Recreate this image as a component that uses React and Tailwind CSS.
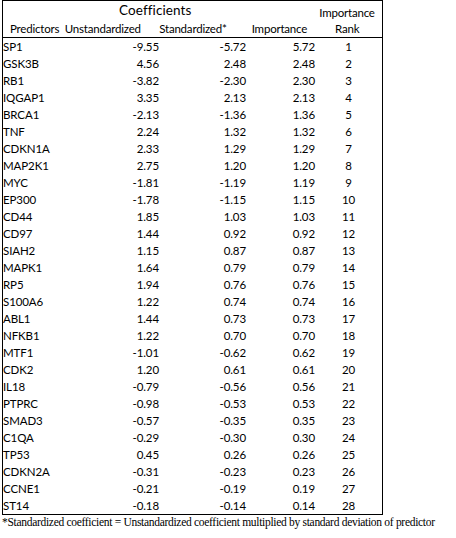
const rows = [
  ["SP1", "-9.55", "-5.72", "5.72", 1],
  ["GSK3B", "4.56", "2.48", "2.48", 2],
  ["RB1", "-3.82", "-2.30", "2.30", 3],
  ["IQGAP1", "3.35", "2.13", "2.13", 4],
  ["BRCA1", "-2.13", "-1.36", "1.36", 5],
  ["TNF", "2.24", "1.32", "1.32", 6],
  ["CDKN1A", "2.33", "1.29", "1.29", 7],
  ["MAP2K1", "2.75", "1.20", "1.20", 8],
  ["MYC", "-1.81", "-1.19", "1.19", 9],
  ["EP300", "-1.78", "-1.15", "1.15", 10],
  ["CD44", "1.85", "1.03", "1.03", 11],
  ["CD97", "1.44", "0.92", "0.92", 12],
  ["SIAH2", "1.15", "0.87", "0.87", 13],
  ["MAPK1", "1.64", "0.79", "0.79", 14],
  ["RP5", "1.94", "0.76", "0.76", 15],
  ["S100A6", "1.22", "0.74", "0.74", 16],
  ["ABL1", "1.44", "0.73", "0.73", 17],
  ["NFKB1", "1.22", "0.70", "0.70", 18],
  ["MTF1", "-1.01", "-0.62", "0.62", 19],
  ["CDK2", "1.20", "0.61", "0.61", 20],
  ["IL18", "-0.79", "-0.56", "0.56", 21],
  ["PTPRC", "-0.98", "-0.53", "0.53", 22],
  ["SMAD3", "-0.57", "-0.35", "0.35", 23],
  ["C1QA", "-0.29", "-0.30", "0.30", 24],
  ["TP53", "0.45", "0.26", "0.26", 25],
  ["CDKN2A", "-0.31", "-0.23", "0.23", 26],
  ["CCNE1", "-0.21", "-0.19", "0.19", 27],
  ["ST14", "-0.18", "-0.14", "0.14", 28],
];

export default function App() {
  return (
    <div className="w-[456px] h-[538px] bg-white text-black font-['Lato',sans-serif]">
      <div className="ml-[2px] w-[381px] border border-black">
        <div className="h-[37px] border-b border-black flex flex-col">
          <div className="flex h-[20px] items-center">
            <div className="w-[116px]" />
            <div className="text-[13.5px] leading-none tracking-[0.1px]">Coefficients</div>
            <div className="flex-1" />
            <div className="w-[70px] text-center text-[11.5px] leading-none pt-[4px] tracking-[-0.2px]">Importance</div>
          </div>
          <div className="flex h-[16px] items-center text-[11.5px] leading-none tracking-[-0.2px]">
            <div className="w-[62px] pl-[7px]">Predictors</div>
            <div className="w-[95px]">Unstandardized</div>
            <div className="w-[93px]">Standardized*</div>
            <div className="w-[61px]">Importance</div>
            <div className="w-[70px] text-center">Rank</div>
          </div>
        </div>
        <div className="flex flex-col text-[11.5px] leading-none tracking-[-0.1px]">
          {rows.map((r) => (
            <div key={r[0]} className="flex h-[17px] items-center">
              <div className="w-[60px]">{r[0]}</div>
              <div className="w-[96px] text-right">{r[1]}</div>
              <div className="w-[87px] text-right">{r[2]}</div>
              <div className="w-[69px] text-right">{r[3]}</div>
              <div className="w-[67px] text-center">{r[4]}</div>
            </div>
          ))}
        </div>
      </div>
      <div className="ml-[2px] mt-[2px] text-[11.5px] leading-none tracking-[-0.3px] font-['Liberation_Serif',serif]">
        *Standardized coefficient = Unstandardized coefficient multiplied by standard deviation of predictor
      </div>
    </div>
  );
}
